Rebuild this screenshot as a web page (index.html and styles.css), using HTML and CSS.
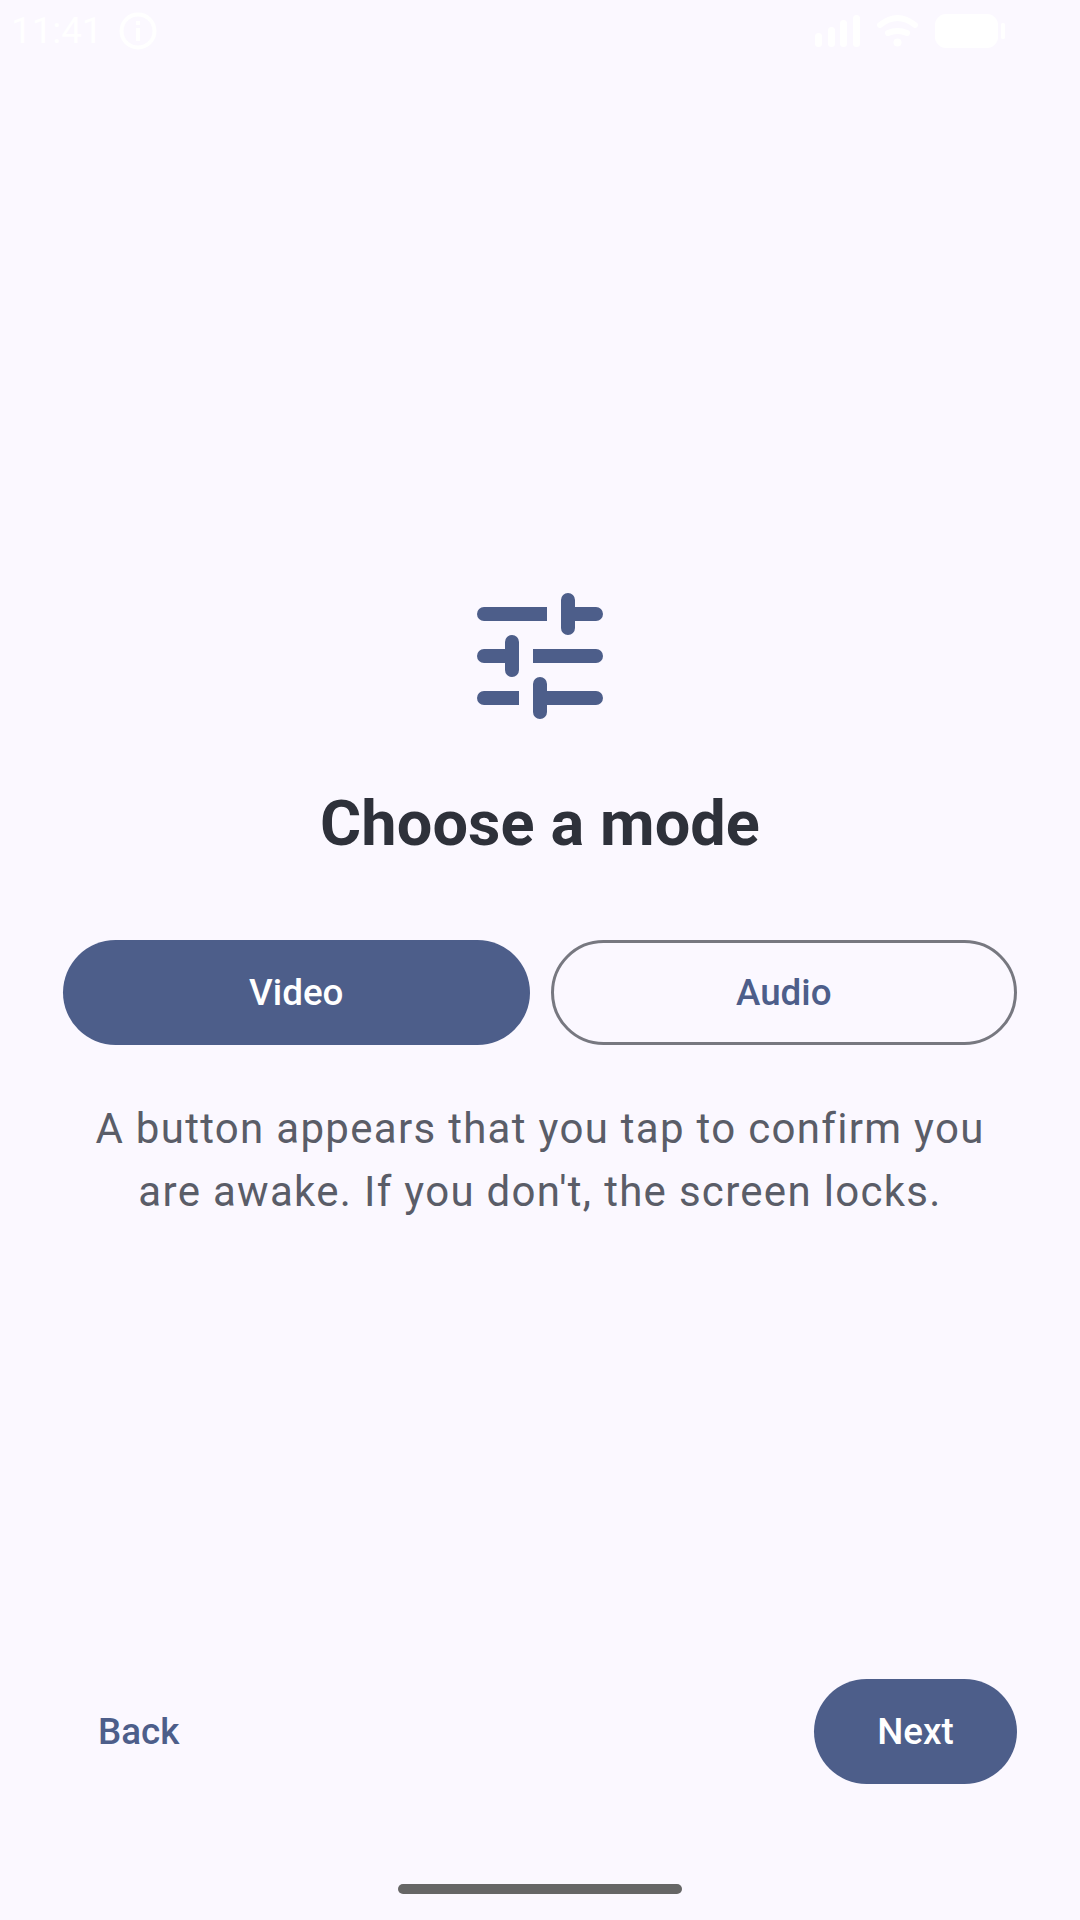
FILE: index.html
```html
<!DOCTYPE html>
<html lang="en">
<head>
    <meta charset="UTF-8">
    <meta name="viewport" content="width=device-width, initial-scale=1.0">
    <title>Choose a mode</title>
    <link rel="stylesheet" href="styles.css">
</head>
<body>
    <div class="status-bar">
        <div class="status-left">
            <span class="clock">11:41</span>
            <svg class="info-icon" width="38" height="38" viewBox="0 0 38 38">
                <circle cx="19" cy="19" r="16.5" fill="none" stroke="#fff" stroke-width="4"/>
                <rect x="17" y="9" width="4" height="4" fill="#fff"/>
                <rect x="17" y="16" width="4" height="13" fill="#fff"/>
            </svg>
        </div>
        <svg class="status-icons" width="192" height="36" viewBox="0 0 192 36">
            <g fill="#fff">
                <rect x="1" y="19" width="7" height="14" rx="3.5"/>
                <rect x="14" y="13" width="7" height="20" rx="3.5"/>
                <rect x="26" y="6" width="7" height="27" rx="3.5"/>
                <rect x="39" y="1" width="7" height="32" rx="3.5"/>
                <circle cx="83.5" cy="28.5" r="4"/>
                <rect x="121" y="0" width="63" height="34" rx="11"/>
                <rect x="187" y="9" width="4" height="16" rx="1.5"/>
            </g>
            <g fill="none" stroke="#fff" stroke-width="6" stroke-linecap="round">
                <path d="M66 11 Q83.5 -3 101 11"/>
                <path d="M74 19 Q83.5 15 93 19"/>
            </g>
        </svg>
    </div>

    <div class="content">
        <svg class="mode-icon" width="126" height="126" viewBox="0 0 126 126">
            <!-- top row -->
            <path d="M7 14H70V28H7a7 7 0 0 1 0-14z"/>
            <path d="M84 7a7 7 0 0 1 14 0V14H119a7 7 0 0 1 0 14H98V35a7 7 0 0 1-14 0z"/>
            <!-- middle row -->
            <path d="M28 49a7 7 0 0 1 14 0V77a7 7 0 0 1-14 0V70H7a7 7 0 0 1 0-14H28z"/>
            <path d="M56 56H119a7 7 0 0 1 0 14H56z"/>
            <!-- bottom row -->
            <path d="M7 98H42V112H7a7 7 0 0 1 0-14z"/>
            <path d="M56 91a7 7 0 0 1 14 0V98H119a7 7 0 0 1 0 14H70V119a7 7 0 0 1-14 0z"/>
        </svg>

        <h1 class="title">Choose a mode</h1>

        <div class="mode-toggle">
            <button class="btn btn-filled">Video</button>
            <button class="btn btn-outline">Audio</button>
        </div>

        <p class="description">A button appears that you tap to confirm you are awake. If you don't, the screen locks.</p>
    </div>

    <div class="footer">
        <button class="btn btn-text">Back</button>
        <button class="btn btn-filled btn-next">Next</button>
    </div>

    <div class="home-bar"></div>
</body>
</html>
```

FILE: styles.css
```css
body {
    font-family: Roboto, "Liberation Sans", sans-serif;
    display: flex;
    flex-direction: column;
    width: 1080px;
    height: 1920px;
    margin: 0;
    background-color: #fbf8ff;
}

.status-bar {
    display: flex;
    justify-content: space-between;
    height: 62px;
    box-sizing: border-box;
    padding: 14px 74px 0 11px;
}

.status-left {
    display: flex;
    align-items: center;
    gap: 16px;
    height: 34px;
}

.clock {
    color: #fff;
    font-size: 36.75px;
    line-height: 34px;
}

.status-icons {
    display: block;
}

.content {
    display: flex;
    flex-direction: column;
    align-items: center;
    flex: 1;
    padding: 531px 63px 0;
}

.mode-icon {
    display: block;
    fill: #4d5e8a;
}

.title {
    margin: 62px 0 0;
    color: #2e313a;
    font-size: 63px;
    font-weight: 700;
    line-height: 86px;
    letter-spacing: 0.1px;
}

.mode-toggle {
    display: grid;
    grid-template-columns: 1fr 1fr;
    gap: 21px;
    width: 100%;
    margin-top: 73px;
}

.btn {
    height: 105px;
    box-sizing: border-box;
    padding: 0 35px;
    border: none;
    border-radius: 53px;
    background: none;
    font-family: inherit;
    font-size: 36.75px;
    font-weight: 500;
    color: #4d5e8a;
}

.btn-filled {
    background-color: #4d5e8a;
    color: #fff;
}

.btn-outline {
    border: 3px solid #777880;
}

.description {
    margin: 52px 0 0;
    color: #5a5d68;
    font-size: 42px;
    line-height: 63px;
    letter-spacing: 1.3px;
    text-align: center;
}

.footer {
    display: flex;
    justify-content: space-between;
    padding: 0 63px 100px;
}

.btn-next {
    width: 203px;
    padding: 0;
}

.home-bar {
    width: 284px;
    height: 10px;
    margin: 0 auto 26px;
    border-radius: 5px;
    background-color: #666;
}
```
